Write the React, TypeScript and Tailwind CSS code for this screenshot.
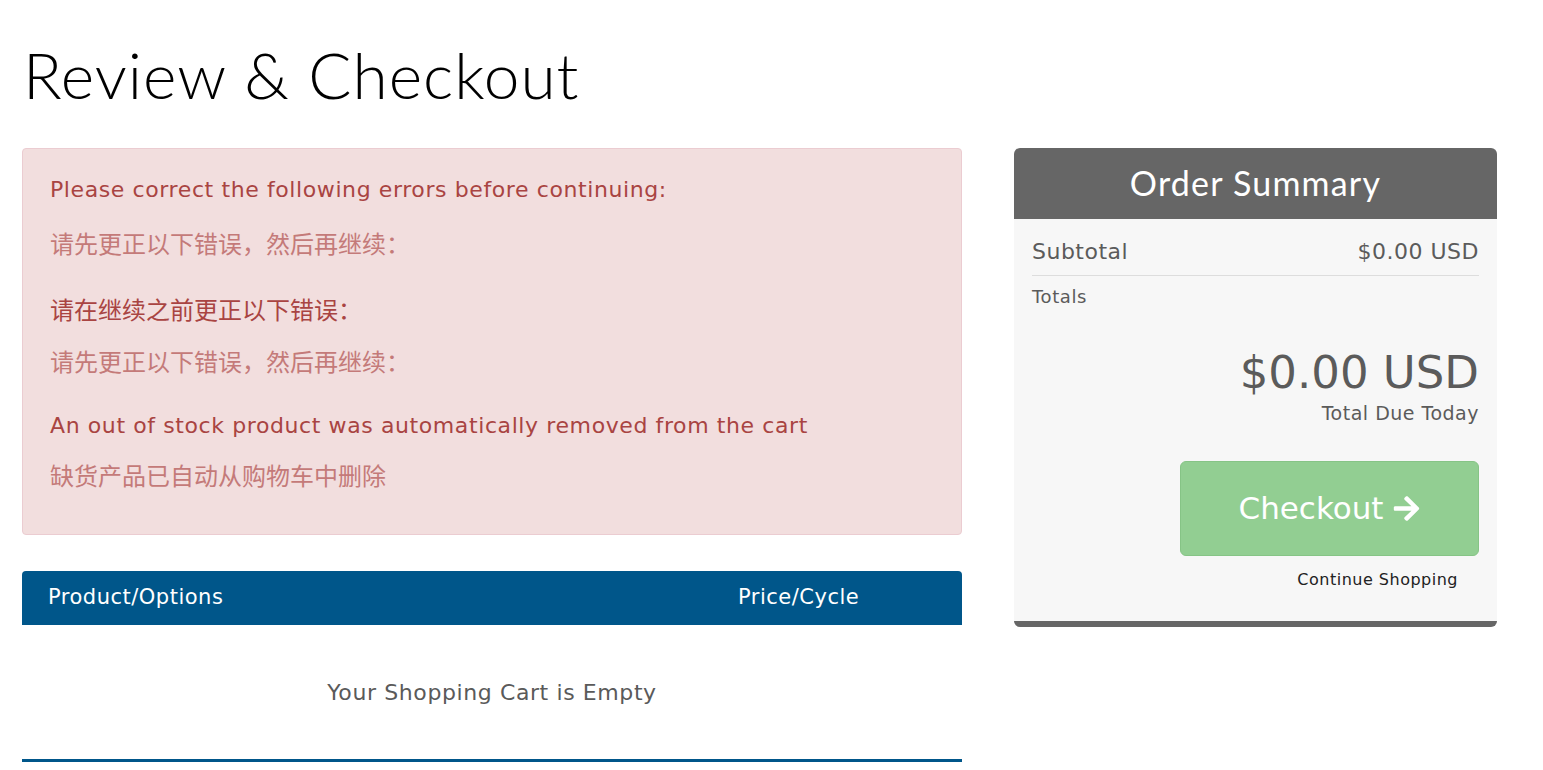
import { FaArrowRight } from "react-icons/fa";

const body = { fontFamily: '"DejaVu Sans", "Noto Sans CJK SC", sans-serif' };
const cjk = { fontFamily: '"Noto Sans CJK SC", "DejaVu Sans", sans-serif' };

const ErrorBox = () => {
  return (
    <div
      className="rounded border border-[#ebccd1] bg-[#f2dede] px-[27px] pt-[25px] pb-[43px] text-[#a94442]"
      style={body}
    >
      <p className="text-[22px] leading-[32px] tracking-[0.6px]">
        Please correct the following errors before continuing:
      </p>
      <p className="mt-[21px] text-[24px] leading-[32px] text-[#c47a79]" style={cjk}>
        请先更正以下错误，然后再继续：
      </p>
      <p className="mt-[34px] text-[24px] leading-[32px]" style={cjk}>
        请在继续之前更正以下错误：
      </p>
      <p className="mt-[20px] text-[24px] leading-[32px] text-[#c47a79]" style={cjk}>
        请先更正以下错误，然后再继续：
      </p>
      <p className="mt-[33px] text-[22px] leading-[32px] tracking-[0.6px]">
        An out of stock product was automatically removed from the cart
      </p>
      <p className="mt-[17px] text-[24px] leading-[32px] text-[#c47a79]" style={cjk}>
        缺货产品已自动从购物车中删除
      </p>
    </div>
  );
};

const CartTable = () => {
  return (
    <div className="mt-[36px]" style={body}>
      <div className="flex h-[54px] items-center rounded-t bg-[#00568a] pl-[26px] text-[21px] tracking-[0.5px] text-white">
        <span className="w-[690px]">Product/Options</span>
        <span>Price/Cycle</span>
      </div>
      <div className="flex h-[137px] items-center justify-center border-b-[3px] border-[#00568a] text-[22px] tracking-[0.6px] text-[#5a5a5a]">
        Your Shopping Cart is Empty
      </div>
    </div>
  );
};

const OrderSummary = () => {
  return (
    <aside className="w-[483px] self-start overflow-hidden rounded-md border-b-[6px] border-[#666]" style={body}>
      <div
        className="flex h-[71px] items-center justify-center bg-[#666] pb-[3px] text-[34px] tracking-[1.2px] text-white"
        style={{ fontFamily: '"Lato", sans-serif' }}
      >
        Order Summary
      </div>
      <div className="bg-[#f7f7f7] px-[18px] pt-[19px] pb-[29px] text-[#5b5b5b]">
        <div className="flex items-center justify-between border-b border-[#ddd] pb-[9px] text-[22px] leading-[28px] tracking-[0.5px]">
          <span>Subtotal</span>
          <span>$0.00 USD</span>
        </div>
        <p className="mt-[9px] text-[18px] leading-[24px] tracking-[0.6px]">Totals</p>
        <div className="mt-[36px] flex flex-col items-end">
          <span className="text-[45px] leading-[56px]">$0.00 USD</span>
          <span className="text-[19px] leading-[24px] tracking-[0.5px]">Total Due Today</span>
        </div>
        <div className="mt-[36px] flex flex-col items-end">
          <button
            type="button"
            className="flex h-[95px] w-[299px] items-center justify-center gap-2 rounded-md border border-[#86c486] bg-[#92ce92] text-[31px] text-white"
          >
            Checkout
            <FaArrowRight className="h-[29px] w-[29px]" />
          </button>
          <a className="mt-[12px] mr-[21px] text-[16px] leading-[24px] tracking-[0.5px] text-[#222]">
            Continue Shopping
          </a>
        </div>
      </div>
    </aside>
  );
};

export default function App() {
  return (
    <div className="min-h-screen bg-white px-[22px] pt-[35px]">
      <h1
        className="pl-[1px] text-[64px] font-light leading-[80px] tracking-[1px] text-black"
        style={{ fontFamily: '"Lato", "Open Sans", sans-serif' }}
      >
        Review &amp; Checkout
      </h1>
      <div className="mt-[33px] flex gap-[52px]">
        <div className="w-[940px]">
          <ErrorBox />
          <CartTable />
        </div>
        <OrderSummary />
      </div>
    </div>
  );
}
